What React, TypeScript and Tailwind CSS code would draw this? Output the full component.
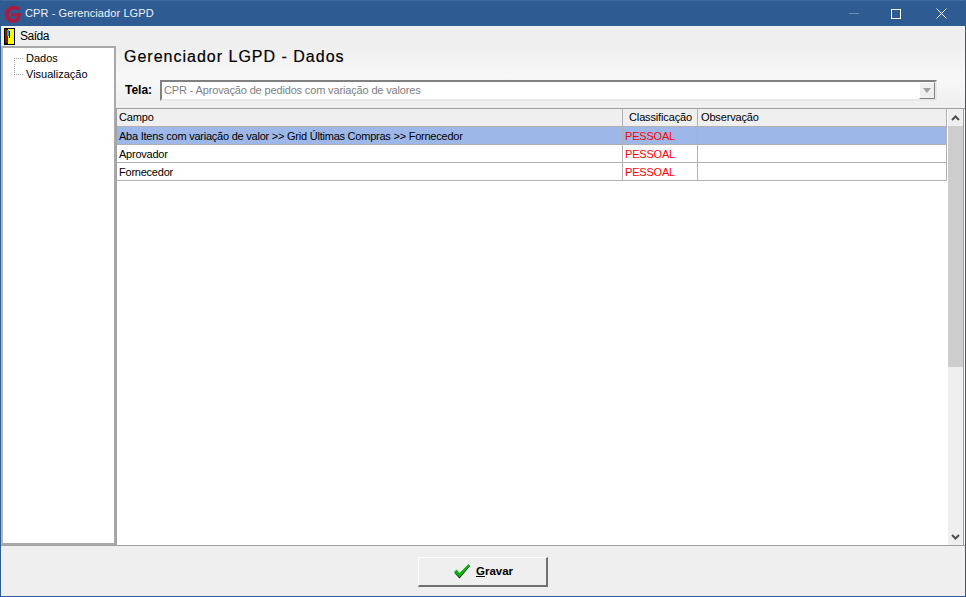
const font = "font-['Liberation_Sans',sans-serif]";

function Logo() {
  return (
    <svg width="18" height="18" viewBox="1.5 1 15.5 15.5" className="shrink-0">
      <path d="M15.5 3.5 C12 0.8 5.5 1 3 5.5 C0.6 10 3.5 16 9 16.2 C11.8 16.3 13.8 15 14.8 13.5 L16.5 8.2 L8.2 8.2 L7.2 10.6 L12.4 10.6 L11.6 12.4 C9 14 5.8 12.6 5.8 9.6 C5.8 5.6 10.6 3.6 14 5.6 Z" fill="#a81d3f" />
    </svg>
  );
}

function DoorIcon() {
  return (
    <svg width="11" height="17" viewBox="0 0 11 17" className="shrink-0">
      <rect x="0" y="0" width="11" height="17" fill="#000" />
      <rect x="4" y="1" width="6" height="15" fill="#ffff00" />
      <path d="M1 1 L4 2 L4 15 L1 15 Z" fill="#8b1414" />
      <rect x="3" y="2" width="2" height="6" fill="#00b0c8" />
      <rect x="5" y="3" width="1" height="7" fill="#000" />
    </svg>
  );
}

function Check() {
  return (
    <svg width="18" height="16" viewBox="0 0 18 16" className="shrink-0">
      <path d="M1.5 9.5 L4 7.5 L6.5 11 L15.5 1.5 L17 2.5 L6.5 15 Z" fill="#06060a" transform="translate(0 0.6)" />
      <path d="M1 9 L3.5 6.5 L6.5 10 L15.5 1 L17 2.5 L6.5 14.5 Z" fill="#10b010" />
    </svg>
  );
}

const rows = [
  { campo: "Aba Itens com variação de valor >> Grid Últimas Compras >> Fornecedor", sel: true },
  { campo: "Aprovador", sel: false },
  { campo: "Fornecedor", sel: false },
];

export default function App() {
  return (
    <div className={`${font} w-[966px] h-[597px] flex flex-col bg-[#efefef] border border-t-0 border-[#2f5b93] text-black text-[11px] tracking-[-0.15px] overflow-hidden`}>
      <div className="h-[26px] shrink-0 -mx-px bg-[#2f5b93] border-t border-[#3f6a9f] flex items-center pl-[4px] text-[#eef2f8] text-[11px]">
        <Logo />
        <span className="ml-[3px] tracking-[0.1px]">CPR - Gerenciador LGPD</span>
        <div className="ml-auto flex items-center">
          <div className="w-[10px] h-px bg-[#6f8fb8] mr-[32px]" />
          <div className="w-[10px] h-[10px] border border-white mr-[35px]" />
          <svg width="11" height="11" viewBox="0 0 11 11" className="mr-[19px]">
            <path d="M0.5 0.5 L10.5 10.5 M10.5 0.5 L0.5 10.5" stroke="#fff" strokeWidth="1" />
          </svg>
        </div>
      </div>
      <div className="h-[20px] shrink-0 flex items-center pl-[3px] gap-[5px] text-[12px]">
        <DoorIcon />
        <span className="tracking-[-0.5px]">Saída</span>
      </div>
      <div className="flex-1 min-h-0 flex border-b border-[#a0a0a0]">
        <div className="w-[115px] shrink-0 bg-white border-2 border-[#a9a9a9] border-l-[#b8b8b8] pt-[2px] relative tracking-normal">
          <div className="h-[16px] flex items-center pl-[23px]">Dados</div>
          <div className="h-[16px] flex items-center pl-[23px]">Visualização</div>
          <div className="absolute left-[11px] top-[10px] h-[17px] w-[9px] border-l border-dotted border-[#a0a0a0]" />
          <div className="absolute left-[11px] top-[10px] w-[9px] border-t border-dotted border-[#a0a0a0]" />
          <div className="absolute left-[11px] top-[26px] w-[9px] border-t border-dotted border-[#a0a0a0]" />
        </div>
        <div className="flex-1 min-w-0 flex flex-col">
          <div className="h-[62px] shrink-0 bg-gradient-to-b from-[#efefef] via-[#f8f8f8] to-[#efefef] pl-[8px]">
            <div className="text-[16px] leading-[20px] mt-px tracking-[1px] [-webkit-text-stroke:0.2px_black]">Gerenciador LGPD - Dados</div>
            <div className="flex items-center mt-[13px] h-[20px]">
              <span className="font-bold w-[35px] ml-px text-[12px] tracking-normal">Tela:</span>
              <div className="w-[777px] h-[21px] bg-white border-2 border-[#808080] border-b-[#e8e8e8] border-r-[#e8e8e8] flex items-center pl-[2px] text-[#808080] relative">
                CPR - Aprovação de pedidos com variação de valores
                <div className="absolute right-0 top-0 w-[16px] h-[17px] bg-[#efefef] border border-[#fff] border-r-[#808080] border-b-[#808080] flex items-center justify-center">
                  <div className="w-0 h-0 border-x-[4px] border-x-transparent border-t-[5px] border-t-[#a0a0a0]" />
                </div>
              </div>
            </div>
          </div>
          <div className="flex-1 min-h-0 bg-white border-l border-t border-[#a0a0a0] flex">
            <div className="w-[830px] shrink-0">
              <div className="h-[17px] flex bg-[#efefef] border-r border-[#b0b0b0]">
                <div className="w-[506px] pl-[2px] border-r border-[#b0b0b0] flex items-center">Campo</div>
                <div className="w-[75px] pl-px border-r border-[#b0b0b0] flex items-center justify-center">Classificação</div>
                <div className="flex-1 pl-[3px] flex items-center">Observação</div>
              </div>
              {rows.map((r) => (
                <div key={r.campo} className={`h-[17px] flex border-t border-b border-r border-[#b0b0b0] -mb-px box-content ${r.sel ? "bg-[#9db8e8]" : "bg-white"}`}>
                  <div className="w-[506px] pl-[2px] pt-px border-r border-[#b0b0b0] flex items-center whitespace-nowrap tracking-[-0.23px]">{r.campo}</div>
                  <div className="w-[75px] pl-[2px] pt-px border-r border-[#b0b0b0] flex items-center text-[#ff0000] tracking-[-0.2px]">PESSOAL</div>
                  <div className="flex-1" />
                </div>
              ))}
            </div>
            <div className="w-[15px] ml-px shrink-0 bg-[#efefef] flex flex-col">
              <div className="h-[17px] flex items-center justify-center shrink-0">
                <svg width="9" height="6" viewBox="0 0 9 6"><path d="M1 5 L4.5 1.5 L8 5" fill="none" stroke="#505050" strokeWidth="2" /></svg>
              </div>
              <div className="h-[241px] bg-[#cdcdcd] shrink-0" />
              <div className="flex-1" />
              <div className="h-[17px] flex items-center justify-center shrink-0">
                <svg width="9" height="6" viewBox="0 0 9 6"><path d="M1 1 L4.5 4.5 L8 1" fill="none" stroke="#505050" strokeWidth="2" /></svg>
              </div>
            </div>
            <div className="w-px shrink-0 bg-[#a0a0a0]" />
          </div>
        </div>
      </div>
      <div className="h-[50px] shrink-0 flex items-center justify-center pr-[1px]">
        <button className="w-[130px] h-[30px] mt-[1px] flex items-center justify-center gap-[5px] pl-[2px] bg-[#efefef] border border-white border-r-[#707070] border-b-[#707070] border-r-2 border-b-2 font-bold text-[11.5px] tracking-normal">
          <Check />
          <span className="pt-px"><u>G</u>ravar</span>
        </button>
      </div>
    </div>
  );
}
